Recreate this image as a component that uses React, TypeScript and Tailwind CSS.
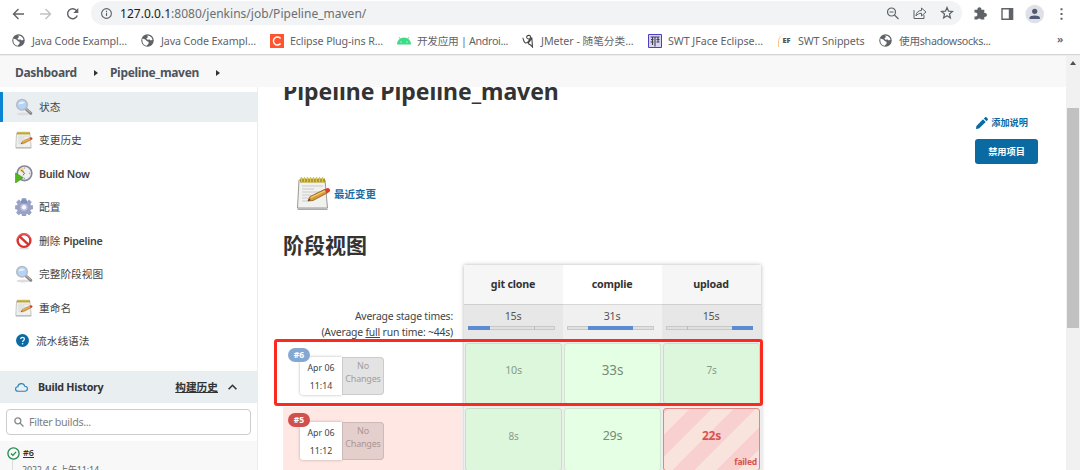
import type { ReactNode } from "react";

const ui = "font-['Noto_Sans','Noto_Sans_CJK_SC',sans-serif]";

function Globe() {
  return (
    <svg className="size-[13px] shrink-0" viewBox="0 0 24 24">
      <circle cx="12" cy="12" r="11.5" fill="#5f6368" />
      <path d="M2.500 8.500 8 10l3 3.500 3 1v3l-3.500 4.300C6 21.500 2.500 18 2.500 12zM11 2.800l5 .7 3.500 3 1.800 4-3.300 1.500-2-2-4 .5-2-2 1.500-2 2-.5z" fill="#fff" />
    </svg>
  );
}

function Magnifier() {
  return (
    <svg className="size-[18px] shrink-0" viewBox="0 0 18 18">
      <ellipse cx="8" cy="16" rx="6.500" ry="1.500" fill="#ddd" />
      <path d="m11 11 4.800 4.300" stroke="#858585" strokeWidth="3" strokeLinecap="round" />
      <path d="m11 10.600 4.700 4.200" stroke="#c4c4c4" strokeWidth="1" />
      <circle cx="7" cy="6.800" r="5.300" fill="#b5d3f6" stroke="#b6bac6" strokeWidth="1.500" />
      <path d="M3.500 6.500C4 3.500 7.500 2.400 10 4.500 8 6.500 6 5.500 3.500 6.500z" fill="#e3f0ff" />
    </svg>
  );
}

function Notepad({ large = false }: { large?: boolean }) {
  return (
    <svg className={large ? "-mt-[1px] h-[35px] w-[35px] shrink-0" : "size-[18px] shrink-0"} viewBox="0 0 35 35">
      <path d="M3 4h26l2.500 28H1.500z" fill="#f1f1ef" stroke="#999a96" strokeWidth="1" />
      <path d="M1.500 32.500h30v1.500h-30z" fill="#aaa" />
      <path d="M6 10h21M6 13h12M6 16h19M6 19h9M6 22h7M6 25h6" stroke="#c9c9c9" strokeWidth="1" />
      <path d="M4 2.500h25v4H4z" fill="#a8942a" />
      <path d="M5.500 1v5.500M8.500 1v5.500M11.500 1v5.500M14.500 1v5.500M17.500 1v5.500M20.500 1v5.500M23.500 1v5.500M26.500 1v5.500" stroke="#d8c748" strokeWidth="1.300" />
      <path d="m12 25 2-4.500L29.500 13l2.500 3.500L17 24.500z" fill="#d99a35" stroke="#8b5a1c" strokeWidth=".8" />
      <path d="m15 21.500 15-7" stroke="#f5cf78" strokeWidth="1.200" />
      <path d="m28.500 13.500 3-1.500c2 0 3.500 2.500 2 3.800l-2.700 1.500z" fill="#dd3c2c" />
      <path d="m12 25 1-2.300 1.500 1.400z" fill="#333" />
    </svg>
  );
}

function Clock() {
  return (
    <svg className="size-[18px] shrink-0" viewBox="0 0 18 18">
      <circle cx="9.500" cy="8.300" r="7.300" fill="#eeeef3" stroke="#85859a" strokeWidth="1.700" />
      <path d="M9.500 8.300 8 3A5.300 5.300 0 0 0 4.600 6z" fill="#f0d35c" />
      <path d="m6.300 5 3.200 3.300-1.500 2" stroke="#555" strokeWidth=".9" fill="none" />
      <path d="M9.500 2.500v1.200M15.200 8.300H14M9.500 14v-1.200" stroke="#999" />
      <path d="M.5 8 8.300 12.700.5 18z" fill="#52b520" stroke="#3c9412" strokeWidth=".6" />
    </svg>
  );
}

function Gear() {
  return (
    <svg className="size-[18px] shrink-0" viewBox="0 0 18 18">
      <path fill="#9aa2c8" stroke="#8089b3" strokeWidth=".5" d="M7.300.5h3.400l.3 2.400 1.300.5 1.900-1.500 2.200 2.200-1.400 1.900.6 1.400 2.200.3v3.200l-2.200.4-.6 1.400 1.400 1.900-2.200 2.300-1.900-1.500-1.400.6-.3 2h-3.200l-.4-2-1.400-.6-1.900 1.500-2.300-2.300 1.500-1.900-.6-1.400L.4 10.900V7.700l2-.3L3 6 1.500 4.100l2.300-2.200 1.900 1.500L7 2.900z" />
      <circle cx="9" cy="9.300" r="3.800" fill="#b9bfdc" />
      <circle cx="9" cy="9.300" r="2.200" fill="#f8f8fc" />
      <path d="M6 1.500h6v4H6z" fill="#607bb0" opacity=".45" />
    </svg>
  );
}

function Forbidden() {
  return (
    <svg className="size-[18px] shrink-0" viewBox="0 0 18 18">
      <ellipse cx="9" cy="16.500" rx="5" ry="1" fill="#ddd" />
      <circle cx="9" cy="8.500" r="6.400" fill="#fff" stroke="#d6322f" strokeWidth="2.400" />
      <path d="m4.600 4.300 8.800 8.400" stroke="#d6322f" strokeWidth="2.400" />
      <path d="M2.300 6.800a7 7 0 0 1 13.200-.5" stroke="#ef8079" strokeWidth=".8" fill="none" />
    </svg>
  );
}

function Help() {
  return (
    <svg className="mr-[1px] ml-[1px] size-[13px] shrink-0" viewBox="0 0 13 13">
      <circle cx="6.500" cy="6.500" r="6.500" fill="#0b6aa2" />
      <path d="M4.700 5.100c0-2.300 3.700-2.300 3.700 0 0 1.300-1.800 1.400-1.800 2.800" stroke="#fff" strokeWidth="1.200" fill="none" />
      <circle cx="6.600" cy="9.700" r=".8" fill="#fff" />
    </svg>
  );
}

function Bookmark({ icon, width, children }: { icon: ReactNode; width: string; children: ReactNode }) {
  return (
    <div className={`flex h-full shrink-0 items-center ${width}`}>
      <div className="flex w-5 shrink-0 items-center">{icon}</div>
      <span className="pt-[1px] whitespace-nowrap">{children}</span>
    </div>
  );
}

function BrowserChrome() {
  return (
    <header className={`shrink-0 bg-white text-[#5f6368] ${ui}`}>
      <div className="flex h-[27px] items-center">
        <svg className="h-[26px] w-[91px] shrink-0" viewBox="0 0 91 26" fill="none" strokeWidth="1.400">
          <path d="M24 13H13.500m5-5-5 5 5 5" stroke="#5f6368" />
          <path d="M40 13h10.500m-5-5 5 5-5 5" stroke="#c0c2c5" />
          <path d="M76.700 9.800A5 5 0 1 0 77.300 14.600" stroke="#5f6368" />
          <path d="M78.300 7v5h-5z" fill="#5f6368" />
        </svg>
        <div className="mb-[1px] flex h-[24px] w-[871px] items-center rounded-full bg-[#f1f3f4] pr-[5px] pl-[10px]">
          <svg className="size-[11px]" viewBox="0 0 11 11" fill="none" stroke="#5f6368" strokeWidth="1.100">
            <circle cx="5.500" cy="5.500" r="4.900" />
            <path d="M5.500 4.800v3.300M5.500 2.700V4" />
          </svg>
          <div className="ml-[8px] pt-[1px] text-[12px] leading-4 tracking-[0.020px] text-[#6b6f73]">
            <span className="text-[#202124]">127.0.0.1</span>:8080/jenkins/job/Pipeline_maven/
          </div>
          <svg className="ml-auto h-[20px] w-[70px]" viewBox="0 0 70 20" fill="none" stroke="#5f6368" strokeWidth="1.200">
            <circle cx="4.500" cy="9" r="4" />
            <path d="M2.500 9h4m1 3 4 4" />
            <path d="M27 7v8.500h10V12M29 13c0-3.500 2.500-5.500 5.500-5.500V5l4.500 4-4.500 4v-2.700c-2.300 0-4 .7-5.500 2.700z" strokeWidth="1" />
            <path d="m60 4.500 1.500 3.600 4 .3-3 2.600.9 4-3.400-2.200-3.400 2.200.9-4-3-2.600 4-.3z" />
          </svg>
        </div>
        <svg className="h-[26px] w-[118px] shrink-0" viewBox="0 0 118 26">
          <path d="M12.500 8.800h3a2 2 0 1 1 3.800 0h3V12a2 2 0 1 1 0 3.800v2.700H19a2 2 0 0 0-3.500 0h-3v-3.300a2 2 0 1 0 0-3.500z" fill="#5f6368" />
          <path d="M40 7.700h10.600v10.600H40z" fill="none" stroke="#5f6368" strokeWidth="1.400" />
          <path d="M46.800 8h4v10h-4z" fill="#5f6368" />
          <circle cx="72.700" cy="13" r="9.300" fill="#dee1e6" />
          <circle cx="72.700" cy="10.300" r="2.600" fill="#4f5b76" />
          <path d="M67.500 18v-1.200c0-3.200 10.400-3.200 10.400 0V18z" fill="#4f5b76" />
          <path d="M98.500 7.300h2v2h-2zm0 4.700h2v2h-2zm0 4.700h2v2h-2z" fill="#5f6368" />
        </svg>
      </div>
      <div className="flex h-[28px] items-center border-b border-[#d4d4d4] pl-[12px] text-[10.700px] tracking-[-0.120px]">
        <Bookmark width="w-[129px]" icon={<Globe />}>Java Code Exampl...</Bookmark>
        <Bookmark width="w-[129px]" icon={<Globe />}>Java Code Exampl...</Bookmark>
        <Bookmark
          width="w-[127px]"
          icon={
            <svg className="h-[14px] w-[14px]" viewBox="0 0 14 14">
              <path d="M0 0h14v14H0z" fill="#ff552e" />
              <path d="M10.600 4.500A4 4 0 1 0 10.600 9.500" fill="none" stroke="#fff" strokeWidth="1.400" />
            </svg>
          }
        >
          Eclipse Plug-ins R...
        </Bookmark>
        <Bookmark
          width="w-[124px]"
          icon={
            <svg className="h-[14px] w-[14px]" viewBox="0 0 14 14">
              <path d="M0 10.500a7 7 0 0 1 14 0z" fill="#3ddc84" />
              <path d="m2 3 1.800 2.700M12 3l-1.800 2.700" stroke="#3ddc84" strokeWidth=".8" />
              <path d="M3.500 7.500h1v1h-1zm6 0h1v1h-1z" fill="#fff" />
            </svg>
          }
        >
          <span className="tracking-[-0.320px]">开发应用 | Androi...</span>
        </Bookmark>
        <Bookmark
          width="w-[127px]"
          icon={
            <svg className="h-[14px] w-[14px]" viewBox="0 0 14 14" fill="none" stroke="#444" strokeWidth="1.100">
              <path d="M1.500 4c1.500 0 .5 5.500 3.500 5 2.500-.5 2.500-2.500 4-3.500M5.500 3c1-2.500 4.500-2 4 .5-.5 2.300-3.500 2-4-.5M7 9.500c1.500-2.500 3-3.500 3.800-6l.7 9.500c-1-1.500-2-2.500-4.500-3.500" />
            </svg>
          }
        >
          <span className="tracking-[-0.040px]">JMeter - 随笔分类...</span>
        </Bookmark>
        <Bookmark
          width="w-[130px]"
          icon={
            <svg className="h-[14px] w-[14px]" viewBox="0 0 14 14">
              <path d="M.5.5h13v13H.5z" fill="#d9d5f5" stroke="#4d3fc4" />
              <path d="M2.500 3h9M7 3v9.500M3 5.500h2.500M8.500 5.500h3M2.500 8h3M8.500 8h3M4.500 3v8M10 3v5" stroke="#40404c" strokeWidth="1.100" />
            </svg>
          }
        >
          <span className="tracking-[-0.040px]">SWT JFace Eclipse...</span>
        </Bookmark>
        <Bookmark
          width="w-[101px]"
          icon={
            <div className="flex h-[13px] w-[14px] items-center justify-center rounded-tl-[8px] border-l border-[#f8c693] text-[7.500px] leading-none font-black tracking-[-0.100px] text-[#555]">
              <span className="pt-[1px] pl-[2px]">EF</span>
            </div>
          }
        >
          SWT Snippets
        </Bookmark>
        <Bookmark width="w-[168px]" icon={<Globe />}><span className="tracking-[-0.300px]">使用shadowsocks...</span></Bookmark>
        <span className="ml-[10px] pb-[3px] text-[11px] font-semibold">»</span>
      </div>
    </header>
  );
}

function Caret() {
  return (
    <svg className="h-[6px] w-[4px]" viewBox="0 0 4 6">
      <path d="m0 0 4 3-4 3z" fill="#333" />
    </svg>
  );
}

function SideItem({ icon, active = false, children }: { icon: ReactNode; active?: boolean; children: ReactNode }) {
  return (
    <div
      className={`mb-[3.430px] flex h-[30px] items-center gap-[6px] border-l-[3px] pl-[12px] text-[10.700px] text-[#444] ${
        active ? "border-[#0b84d3] bg-[#e9eef1]" : "border-transparent"
      }`}
    >
      {icon}
      <span className="leading-4">{children}</span>
    </div>
  );
}

function Sidebar() {
  return (
    <aside className="flex h-full w-[258px] shrink-0 flex-col border-r border-[#ececec] pt-[5px]">
      <nav className="h-[279px] shrink-0">
        <SideItem active icon={<Magnifier />}>状态</SideItem>
        <SideItem icon={<Notepad />}>变更历史</SideItem>
        <SideItem icon={<Clock />}><span className="font-semibold tracking-[-0.270px]">Build Now</span></SideItem>
        <SideItem icon={<Gear />}>配置</SideItem>
        <SideItem icon={<Forbidden />}>删除 <span className="font-semibold tracking-[-0.300px]">Pipeline</span></SideItem>
        <SideItem icon={<Magnifier />}>完整阶段视图</SideItem>
        <SideItem icon={<Notepad />}>重命名</SideItem>
        <SideItem icon={<Help />}>流水线语法</SideItem>
      </nav>
      <div className="flex h-[32px] shrink-0 items-center bg-[#e9eef1] pl-[15px] font-bold text-[#333]">
        <svg className="h-[9px] w-[13px]" viewBox="0 0 13 9" fill="none" stroke="#2d83b8" strokeWidth="1.100">
          <path d="M3.200 8.300c-3.600 0-3.300-4.300-.4-4.500C3.400-.2 8.800-.4 9.800 3.300c3.500 0 3.500 5 0 5z" />
        </svg>
        <span className="ml-[10px] text-[10.700px] tracking-[-0.270px]">Build History</span>
        <span className="ml-auto text-[10.700px] underline">构建历史</span>
        <svg className="mr-[20px] ml-[10px] h-[6px] w-[9px]" viewBox="0 0 9 6" fill="none" stroke="#333" strokeWidth="1.600">
          <path d="m.6 5.300 3.900-4 3.900 4" />
        </svg>
      </div>
      <div className="mt-[6px] ml-[6px] flex h-[26px] w-[245px] shrink-0 items-center rounded-[4px] border border-[#ccc] bg-white pl-[7px] text-[#808080]">
        <svg className="size-[10px]" viewBox="0 0 10 10" fill="none" stroke="#888" strokeWidth="1.300">
          <circle cx="3.800" cy="3.800" r="3" />
          <path d="m6 6 3.500 3.500" />
        </svg>
        <span className="ml-[5px] pt-[1px] text-[10.700px] tracking-[-0.330px]">Filter builds...</span>
      </div>
      <div className="mt-[6px] h-[40px] shrink-0 bg-[#f8f8f8] pt-[5px] pl-[7px]">
        <div className="flex h-[14px] items-center">
          <svg className="size-[13px]" viewBox="0 0 13 13" fill="none" stroke="#1e8a4c" strokeWidth="1.300">
            <circle cx="6.500" cy="6.500" r="5.600" />
            <path d="m4 6.500 1.900 1.900 3.200-3.500" />
          </svg>
          <span className="ml-[3px] text-[9px] font-semibold underline">#6</span>
        </div>
        <div className="ml-[5px] flex h-[18px] items-center border-l border-[#ddd] pt-[1px] pl-[9px] text-[9px] tracking-[-0.200px] text-[#666]">2022-4-6 上午11:14</div>
      </div>
    </aside>
  );
}

function StageHeader({ name, time, shade, children }: { name: string; time: string; shade: string; children: ReactNode }) {
  return (
    <div className={`w-[99px] ${shade}`}>
      <div className="flex h-[39px] items-center justify-center text-[10.700px] font-bold tracking-[-0.200px] text-[#333]">{name}</div>
      <div className="flex h-[37px] flex-col items-center border-t border-black/10 bg-black/6 pt-[4px]">
        <span className="text-[10.700px] leading-[14px] tracking-[-0.200px] text-[#555]">{time}</span>
        <div className="mt-[3px] mr-[4px] flex h-[4px] w-[87px] bg-[#e0e0e0] shadow-[inset_0_0_0_1px_#c8c8c8]">{children}</div>
      </div>
    </div>
  );
}

function RunRow({ id, time, failed = false, children }: { id: string; time: string; failed?: boolean; children: ReactNode }) {
  return (
    <div className={failed ? "flex h-[67px]" : "flex h-[65px]"}>
      <div className={`mt-[1px] w-[179px] pt-[15px] pl-[17px] ${failed ? "bg-[#ffe8e3]" : "bg-white"}`}>
        <div className="relative flex h-[38px]">
          <div className="flex w-[42px] flex-col items-center rounded-l-[3px] bg-white pt-[2px] text-[8.800px] leading-[18px] text-[#444] shadow-[0_0_3px_rgba(0,0,0,0.3)]">
            <span>Apr 06</span>
            <span>{time}</span>
          </div>
          <div className={`flex w-[42px] flex-col items-center rounded-r-[4px] border border-black/10 pt-[1px] text-[9px] leading-[13px] tracking-[-0.200px] ${failed ? "bg-[#e5cfcc] text-[#aa9694]" : "bg-[#e3e3e3] text-[#a0a0a0]"}`}>
            <span>No</span>
            <span>Changes</span>
          </div>
          <div className={`absolute -top-[9px] -left-[12px] flex h-[14px] w-[22px] items-center justify-center rounded-full text-[8.500px] font-bold text-white ${failed ? "bg-[#d2504c]" : "bg-[#84a9d1]"}`}>
            {id}
          </div>
        </div>
      </div>
      <div className="ml-[2px] flex gap-[2px] bg-[#eeeeee] pt-[2px] pr-[2px] pb-[2px] pl-[1px]">{children}</div>
    </div>
  );
}

function Cell({ className, children }: { className: string; children: ReactNode }) {
  return (
    <div className={`flex h-full w-[97px] items-center justify-center rounded-[3px] border pb-[7px] tracking-[-0.200px] ${className}`}>{children}</div>
  );
}

const dim = "border-[#c9dec9] bg-[#ddf7dc] text-[#899b89]";
const bright = "border-[#cfe5cf] bg-[#e4ffe3] text-[#788a78]";

function StageView() {
  return (
    <div className="relative mt-[3px] w-[480px]">
      <div className="flex">
        <div className="h-[78px] w-[170px] pt-[43px] text-right text-[10.400px] leading-[16px] tracking-[-0.190px] text-[#444]">
          Average stage times:
          <br />
          (Average <span className="underline">full</span> run time: ~44s)
        </div>
        <div className="ml-[10.500px] shadow-[0_0_4px_rgba(0,0,0,0.3)]">
          <div className="flex h-[76px] bg-[#eee]">
            <StageHeader name="git clone" time="15s" shade="bg-[#f6f6f6]">
              <div className="w-[22px] bg-[#5b8bd0]" />
              <div className="mr-[20px] ml-auto w-px bg-[#bbb]" />
            </StageHeader>
            <StageHeader name="complie" time="31s" shade="bg-white">
              <div className="ml-[21px] w-[45px] bg-[#5b8bd0]" />
            </StageHeader>
            <StageHeader name="upload" time="15s" shade="bg-[#f6f6f6]">
              <div className="ml-[21px] w-px bg-[#bbb]" />
              <div className="ml-auto w-[21px] bg-[#5b8bd0]" />
            </StageHeader>
          </div>
          <div className="h-[138px]" />
        </div>
      </div>
      <div className="-mt-[138px]">
        <RunRow id="#6" time="11:14">
          <Cell className={`text-[10.700px] ${dim}`}>10s</Cell>
          <Cell className={`text-[13.500px] ${bright}`}>33s</Cell>
          <Cell className={`text-[10px] ${dim}`}>7s</Cell>
        </RunRow>
        <RunRow id="#5" time="11:12" failed>
          <Cell className={`text-[10px] ${dim}`}>8s</Cell>
          <Cell className={`text-[12.500px] ${bright}`}>29s</Cell>
          <Cell className="relative border-[#e08582] bg-[linear-gradient(135deg,#f8d0d0_0px,#f8d0d0_3px,#f8e3dd_3px,#f8e3dd_18px,#f8d0d0_18px,#f8d0d0_33.500px,#f8e3dd_33.500px,#f8e3dd_49px,#f8d0d0_49px,#f8d0d0_64.500px,#f8e3dd_64.500px,#f8e3dd_80px,#f8d0d0_80px,#f8d0d0_95.500px,#f8e3dd_95.500px,#f8e3dd_111px,#f8d0d0_111px)] text-[12px] font-bold text-[#d9534f]">
            22s
            <span className="absolute right-[2px] bottom-[1px] text-[8.500px] leading-[14px]">failed</span>
          </Cell>
        </RunRow>
      </div>
      <div className="absolute top-[74px] -left-[9px] h-[67px] w-[489px] rounded-[3px] border-[3px] border-[#fb2a20]" />
    </div>
  );
}

function Main() {
  return (
    <main className="min-w-0 grow overflow-hidden pr-[28px] pl-[25px]">
      <h1 className="-mt-[13px] h-[37px] text-[23px] leading-[34px] font-bold tracking-[-0.060px] text-[#333]">Pipeline Pipeline_maven</h1>
      <div className="flex flex-col items-end text-[9.200px] font-bold">
        <div className="mt-[4px] mr-[10px] flex h-[16px] items-center gap-[3px] text-[#0b6aa2]">
          <svg className="size-[12px]" viewBox="0 0 12 12" fill="#0b6aa2">
            <path d="m0 12 .4-3L7 2.300 9.700 5 3 11.600zM7.800 1.500 9 .4c.5-.5 1-.5 1.500 0l1.100 1.100c.5.5.5 1 0 1.500l-1.100 1.200z" />
          </svg>
          添加说明
        </div>
        <button className="mt-[8px] flex h-[25px] w-[63px] items-center justify-center rounded-[3px] bg-[#0b6aa2] text-white">禁用项目</button>
      </div>
      <div className="mt-[12px] ml-[13px] flex h-[36px] items-center gap-[3px] text-[10.500px] font-bold text-[#1b6d9f]">
        <Notepad large />
        <span className="pt-[1px]">最近变更</span>
      </div>
      <h2 className="mt-[15px] h-[35px] text-[21px] leading-[36px] font-bold text-[#333]">阶段视图</h2>
      <StageView />
    </main>
  );
}

export default function App() {
  return (
    <div className={`flex h-[470px] w-[1080px] flex-col overflow-hidden bg-white text-[#333] ${ui}`}>
      <BrowserChrome />
      <div className="flex min-h-0 grow border-t border-[#ececec]">
        <div className="flex w-[1066px] shrink-0 flex-col">
          <div className="z-10 flex h-[31px] shrink-0 items-center bg-[#f8f8f8] pt-[2px] pl-[15px] text-[12px] font-bold tracking-[-0.330px] text-[#4d545d]">
            <span className="w-[79px]">Dashboard</span>
            <Caret />
            <span className="ml-[12px] w-[106px]">Pipeline_maven</span>
            <Caret />
          </div>
          <div className="flex min-h-0 grow">
            <Sidebar />
            <Main />
          </div>
        </div>
        <div className="flex w-[14px] shrink-0 flex-col items-center bg-[#f1f1f1]">
          <svg className="mt-[5px] h-[4px] w-[6px]" viewBox="0 0 6 4">
            <path d="m0 4 3-4 3 4z" fill="#505050" />
          </svg>
          <div className="mt-[43px] h-[220px] w-[12px] bg-[#c1c1c1]" />
        </div>
      </div>
    </div>
  );
}
